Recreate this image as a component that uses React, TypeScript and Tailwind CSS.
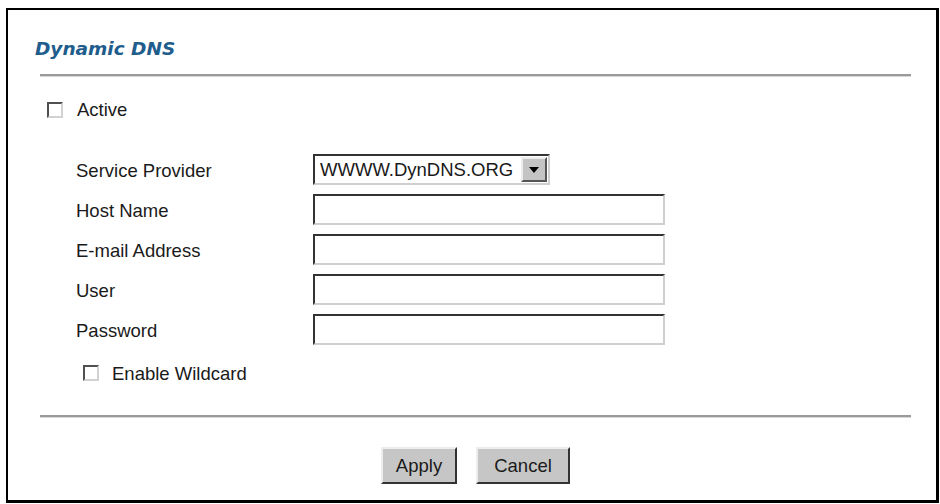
import React from "react";

const LABEL = "text-[18.5px] leading-[22px] text-[#1a1a1a] [font-family:'Liberation_Sans',Arial,sans-serif]";

function CheckBox() {
  return (
    <span className="box-border block h-[16px] w-[16px] shrink-0 border-2 border-t-[#505050] border-l-[#505050] border-b-[#d2d2d2] border-r-[#d2d2d2] bg-white" />
  );
}

function TextBox() {
  return (
    <div className="h-[31px] w-[352px] border-2 border-t-[#333] border-l-[#333] border-b-[#cfcfcf] border-r-[#cfcfcf] bg-white" />
  );
}

function ProviderSelect() {
  return (
    <div className="flex h-[31px] w-[237px] items-center border-2 border-t-[#333] border-l-[#333] border-b-[#cfcfcf] border-r-[#cfcfcf] bg-white pl-[5px] pr-[1px]">
      <span className={`${LABEL} flex-1 whitespace-nowrap`}>WWWW.DynDNS.ORG</span>
      <span className="flex h-[25px] w-[26px] items-center justify-center border-2 border-t-[#ececec] border-l-[#ececec] border-b-[#555] border-r-[#555] bg-[#c4c4c4]">
        <svg width="10" height="6" viewBox="0 0 10 6">
          <path d="M0 0h10L5 6z" fill="#000" />
        </svg>
      </span>
    </div>
  );
}

function Win95Button({ label, width }: { label: string; width: string }) {
  return (
    <button
      type="button"
      className={`${width} h-[37px] border-2 border-t-[#ededed] border-l-[#ededed] border-b-[#333] border-r-[#333] bg-[#c6c6c6] ${LABEL}`}
    >
      {label}
    </button>
  );
}

const FIELDS = ["Host Name", "E-mail Address", "User", "Password"];

export default function App() {
  return (
    <div className="min-h-[504px] bg-white pt-[8px] pl-[6px]">
      <div className="box-border flex h-[495px] w-[933px] flex-col border-2 border-r-[3px] border-b-[3px] border-black pl-[32px] pr-[25px]">
        {/* Title */}
        <h1 className="mt-[28px] -ml-[5px] text-[18.5px] leading-[22px] font-bold italic text-[#1f5d8c] [font-family:'DejaVu_Sans',Verdana,sans-serif]">
          Dynamic DNS
        </h1>
        <div className="mt-[14px] h-[3px] border-t-2 border-b border-t-[#9a9a9a] border-b-[#d8d8d8]" />

        {/* Active */}
        <label className="mt-[22px] ml-[7px] flex items-center gap-[14px]">
          <CheckBox />
          <span className={LABEL}>Active</span>
        </label>

        {/* Form rows */}
        <div className="mt-[33px] ml-[36px] flex flex-col gap-[9px]">
          <div className="flex h-[31px] items-center">
            <span className={`${LABEL} w-[237px] pt-[2px]`}>Service Provider</span>
            <ProviderSelect />
          </div>
          {FIELDS.map((f) => (
            <div key={f} className="flex h-[31px] items-center">
              <span className={`${LABEL} w-[237px] pt-[2px]`}>{f}</span>
              <TextBox />
            </div>
          ))}
        </div>

        {/* Wildcard */}
        <label className="mt-[16px] ml-[43px] flex items-center gap-[13px]">
          <CheckBox />
          <span className={`${LABEL} pt-[2px]`}>Enable Wildcard</span>
        </label>

        <div className="mt-[30px] h-[3px] border-t-2 border-b border-t-[#9a9a9a] border-b-[#d8d8d8]" />

        {/* Buttons */}
        <div className="mt-[29px] flex justify-center gap-[19px]">
          <Win95Button label="Apply" width="w-[76px]" />
          <Win95Button label="Cancel" width="w-[94px]" />
        </div>
      </div>
    </div>
  );
}
